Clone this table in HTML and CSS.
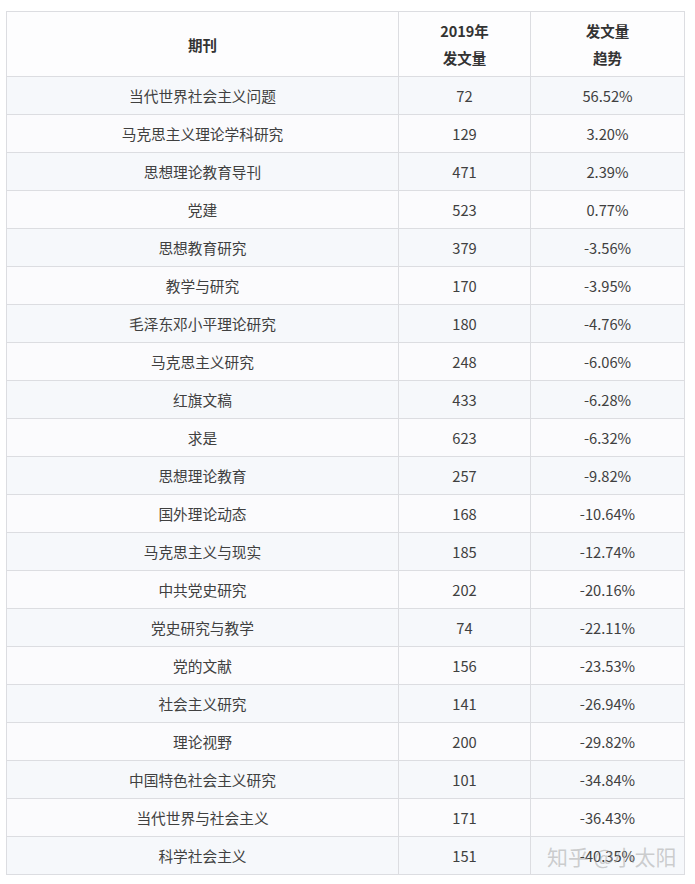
FILE: index.html
```html
<!DOCTYPE html>
<html lang="zh">
<head>
<meta charset="utf-8">
<link rel="stylesheet" href="styles.css">
</head>
<body>
<div class="wrap">
<table class="data">
<thead>
<tr class="head"><th class="c1">期刊</th><th class="c2">2019年<br>发文量</th><th class="c3">发文量<br>趋势</th></tr>
</thead>
<tbody>
<tr><td>当代世界社会主义问题</td><td>72</td><td>56.52%</td></tr>
<tr><td>马克思主义理论学科研究</td><td>129</td><td>3.20%</td></tr>
<tr><td>思想理论教育导刊</td><td>471</td><td>2.39%</td></tr>
<tr><td>党建</td><td>523</td><td>0.77%</td></tr>
<tr><td>思想教育研究</td><td>379</td><td>-3.56%</td></tr>
<tr><td>教学与研究</td><td>170</td><td>-3.95%</td></tr>
<tr><td>毛泽东邓小平理论研究</td><td>180</td><td>-4.76%</td></tr>
<tr><td>马克思主义研究</td><td>248</td><td>-6.06%</td></tr>
<tr><td>红旗文稿</td><td>433</td><td>-6.28%</td></tr>
<tr><td>求是</td><td>623</td><td>-6.32%</td></tr>
<tr><td>思想理论教育</td><td>257</td><td>-9.82%</td></tr>
<tr><td>国外理论动态</td><td>168</td><td>-10.64%</td></tr>
<tr><td>马克思主义与现实</td><td>185</td><td>-12.74%</td></tr>
<tr><td>中共党史研究</td><td>202</td><td>-20.16%</td></tr>
<tr><td>党史研究与教学</td><td>74</td><td>-22.11%</td></tr>
<tr><td>党的文献</td><td>156</td><td>-23.53%</td></tr>
<tr><td>社会主义研究</td><td>141</td><td>-26.94%</td></tr>
<tr><td>理论视野</td><td>200</td><td>-29.82%</td></tr>
<tr><td>中国特色社会主义研究</td><td>101</td><td>-34.84%</td></tr>
<tr><td>当代世界与社会主义</td><td>171</td><td>-36.43%</td></tr>
<tr><td>科学社会主义</td><td>151</td><td>-40.35%</td></tr>
</tbody>
</table>
<div class="watermark">知乎 @小太阳</div>
</div>
</body>
</html>
```

FILE: styles.css
```css
html, body {
  margin: 0;
  padding: 0;
  background: #ffffff;
}
body {
  font-family: "Noto Sans CJK SC", "Noto Sans", sans-serif;
  color: #404040;
}
.wrap {
  position: relative;
  padding: 11px 0 0 6px;
  width: 677px;
}
.data {
  border-collapse: collapse;
  width: 677px;
  table-layout: fixed;
  font-size: 14.7px;
}
.data th, .data td {
  border: 1px solid #dcdde1;
  text-align: center;
  vertical-align: middle;
  padding: 0;
}
.c1 { width: 391px; }
.c2 { width: 131px; }
.c3 { width: 153px; }
.head {
  height: 65px;
}
.head th {
  font-weight: 700;
  font-size: 14.5px;
  color: #333333;
  line-height: 27px;
  background: #fdfdfe;
}
.data tbody tr {
  height: 38px;
}
.data tbody tr:nth-child(odd) td {
  background: #f6f8fb;
}
.data tbody tr:nth-child(even) td {
  background: #fbfbfd;
}
.watermark {
  position: absolute;
  left: 547px;
  top: 841px;
  font-size: 21px;
  color: rgba(160, 160, 160, 0.5);
  white-space: nowrap;
}
```
